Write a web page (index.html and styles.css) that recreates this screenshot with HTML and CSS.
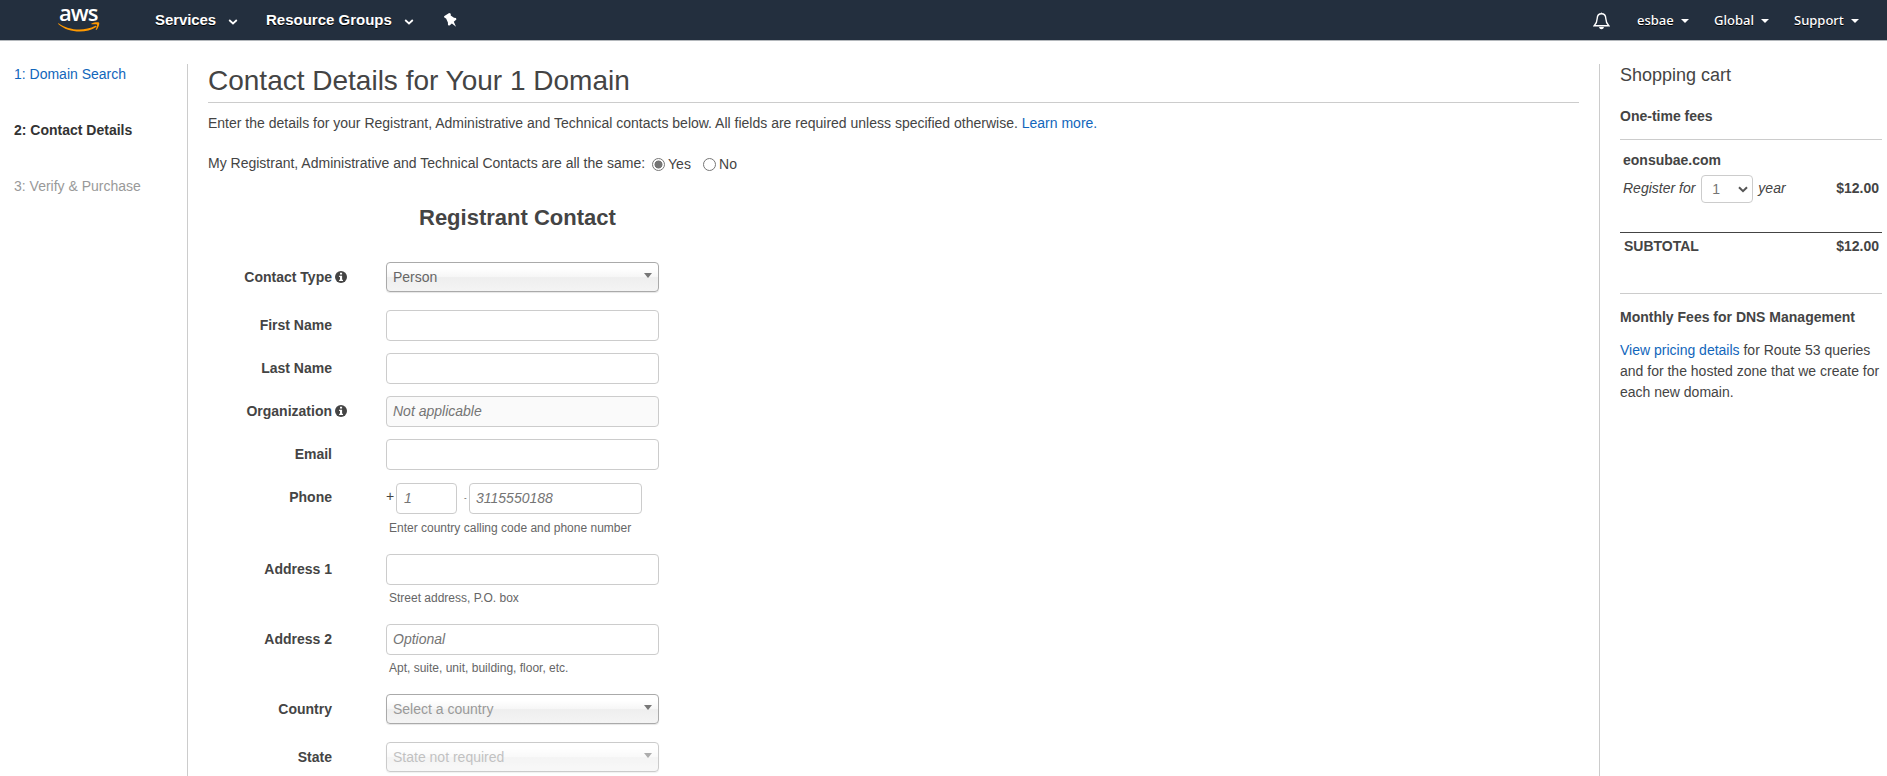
FILE: index.html
```
<!DOCTYPE html>
<html lang="en">
<head>
<meta charset="utf-8">
<title>Contact Details</title>
<link rel="stylesheet" href="styles.css">
</head>
<body>
<header class="topbar">
  <div class="brand">
    <div class="brand-text">aws</div>
    <svg class="smile" width="42" height="11" viewBox="0 0 42 11"><path d="M0.6 1.2C10 8 25 10 37.500 3.800C38.500 3.400 39 4.400 38.200 5C28 12 10 11 0.200 2C0 1.500 0.200 1 0.600 1.200Z" fill="#f90"/><path d="M33.500 1.600C36 0 40.500 0 41.100 0.700C41.700 1.700 40.500 6 38.300 7.900C37.700 8.200 37.500 8 37.800 7.400C38.500 5.600 39.400 3.300 39 2.600C38.500 2 36 2.100 33.900 2.300C33.300 2.300 33.200 1.900 33.500 1.600Z" fill="#f90"/></svg>
  </div>
  <div class="menu services">Services<svg width="10" height="6" viewBox="0 0 10 6"><path d="M1.200 1L5 4.500L8.800 1" fill="none" stroke="#fff" stroke-width="1.700"/></svg></div>
  <div class="menu groups">Resource Groups<svg width="10" height="6" viewBox="0 0 10 6"><path d="M1.200 1L5 4.500L8.800 1" fill="none" stroke="#fff" stroke-width="1.700"/></svg></div>
  <svg class="pin" width="13" height="14" viewBox="0 0 13 14"><path d="M5.200 0L6.800 0.700L6.700 2.500L10 4.700L12 5L12.400 6.600L9.800 8.700L12 13.700L7.900 10.400L5.500 12.600L4 12.200L3.900 9.600L2.100 5.500L0.500 4.800L0 3.200Z" fill="#fff"/></svg>
  <div class="account">
    <svg class="bell" width="17" height="18" viewBox="0 0 17 18"><path d="M8.500 1.800C5.500 1.800 4.300 4 4.200 6.500C4.100 9.500 3.500 11.500 1.200 13.800H15.800C13.500 11.500 12.900 9.500 12.800 6.500C12.700 4 11.500 1.800 8.500 1.800Z" fill="none" stroke="#fff" stroke-width="1.400"/><path d="M7.500 1.500Q8.500 -0.500 9.500 1.500M6 15H11Q10.500 17.300 8.500 17.300T6 15Z" fill="#fff"/></svg>
    <div class="acct esbae">esbae<i class="tri"></i></div>
    <div class="acct global">Global<i class="tri"></i></div>
    <div class="acct support">Support<i class="tri"></i></div>
  </div>
</header>
<div class="page">
  <nav class="steps">
    <a class="step link">1: Domain Search</a>
    <div class="step current">2: Contact Details</div>
    <div class="step later">3: Verify &amp; Purchase</div>
  </nav>
  <main class="content">
    <h1>Contact Details for Your 1 Domain</h1>
    <p class="intro">Enter the details for your Registrant, Administrative and Technical contacts below. All fields are required unless specified otherwise. <a class="link">Learn more.</a></p>
    <div class="same"><span>My Registrant, Administrative and Technical Contacts are all the same:</span><i class="radio on"></i><span class="opt yes">Yes</span><i class="radio"></i><span class="opt">No</span></div>
    <h2>Registrant Contact</h2>
    <form class="form">
      <div class="row tall"><label>Contact Type</label><svg class="info" width="12" height="12" viewBox="0 0 12 12"><circle cx="6" cy="6" r="6" fill="#444"/><path d="M5 1.800H7.100V3.600H5ZM4.100 4.700H7.100V8.700H8V10H4.100V8.700H5V6H4.100Z" fill="#fff"/></svg><div class="field"><div class="select">Person<i class="arrow"></i></div></div></div>
      <div class="row"><label>First Name</label><div class="field"><div class="input"></div></div></div>
      <div class="row"><label>Last Name</label><div class="field"><div class="input"></div></div></div>
      <div class="row"><label>Organization</label><svg class="info" width="12" height="12" viewBox="0 0 12 12"><circle cx="6" cy="6" r="6" fill="#444"/><path d="M5 1.800H7.100V3.600H5ZM4.100 4.700H7.100V8.700H8V10H4.100V8.700H5V6H4.100Z" fill="#fff"/></svg><div class="field"><div class="input off">Not applicable</div></div></div>
      <div class="row"><label>Email</label><div class="field"><div class="input"></div></div></div>
      <div class="row phone"><label>Phone</label><div class="field"><div class="numbers"><span class="plus">+</span><div class="input code">1</div><span class="dash">-</span><div class="input number">3115550188</div></div><div class="hint">Enter country calling code and phone number</div></div></div>
      <div class="row noted"><label>Address 1</label><div class="field"><div class="input"></div><div class="hint">Street address, P.O. box</div></div></div>
      <div class="row noted"><label>Address 2</label><div class="field"><div class="input">Optional</div><div class="hint">Apt, suite, unit, building, floor, etc.</div></div></div>
      <div class="row tall"><label>Country</label><div class="field"><div class="select empty">Select a country<i class="arrow"></i></div></div></div>
      <div class="row"><label>State</label><div class="field"><div class="select empty disabled">State not required<i class="arrow"></i></div></div></div>
    </form>
  </main>
  <aside class="cart">
    <h3>Shopping cart</h3>
    <div class="fees">One-time fees</div>
    <div class="domain">eonsubae.com</div>
    <div class="register"><em>Register for</em><div class="years">1<svg width="10" height="7" viewBox="0 0 10 7"><path d="M1 1.200L5 5.200L9 1.200" fill="none" stroke="#555" stroke-width="2"/></svg></div><em>year</em><b class="price">$12.00</b></div>
    <div class="subtotal"><span>SUBTOTAL</span><span>$12.00</span></div>
    <div class="monthly">Monthly Fees for DNS Management</div>
    <p class="pricing"><a class="link">View pricing details</a> for Route 53 queries and for the hosted zone that we create for each new domain.</p>
  </aside>
</div>
</body>
</html>
```
FILE: styles.css
```
* { box-sizing: border-box; }
body { margin: 0; height: 776px; overflow: hidden; background: #fff; color: #444; font: 14px/21px "Liberation Sans", Arial, sans-serif; }
.topbar { height: 41px; background: #232f3e; border-bottom: 1px solid #b4b8bc; display: flex; align-items: flex-start; color: #fff; }
.brand { width: 42px; margin-left: 58px; height: 40px; padding-top: 2px; }
.brand-text { font: 600 22px/20px "Open Sans", sans-serif; padding-left: 1px; letter-spacing: -1px; }
.smile { display: block; margin-top: -0.5px; }
.menu { display: flex; align-items: center; font-weight: bold; font-size: 15px; line-height: 40px; white-space: nowrap; text-shadow: 0 1px 0 #000; }
.menu svg { margin: 3px 0 0 12px; }
.services { margin-left: 55px; width: 111px; letter-spacing: -0.1px; }
.groups { width: 178px; }
.pin { margin-top: 13px; }
.account { margin-left: auto; display: flex; align-items: flex-start; font: 500 13px/40px "Noto Sans", sans-serif; text-shadow: 0 1px 0 #000; }
.bell { margin: 12px 27px 0 0; }
.acct { display: flex; align-items: center; }
.esbae { width: 77px; }
.global { width: 80px; }
.support { width: 93px; }
.tri { border: 4px solid transparent; border-top-color: #fff; border-bottom: 0; margin: 1px 0 0 7px; }
.link { color: #1166bb; }
.page { display: flex; height: 735px; padding-top: 23px; }
.steps { width: 188px; border-right: 1px solid #ccc; padding-left: 14px; }
.step { display: block; height: 56px; }
.current { font-weight: bold; color: #333; }
.later { color: #999; }
.content { width: 1371px; margin-left: 20px; }
h1 { margin: 0; height: 39px; border-bottom: 1px solid #ccc; font-size: 28px; font-weight: normal; line-height: 33px; }
.intro { margin: 10px 0 19px; }
.same { display: flex; height: 21px; }
.radio { width: 13px; height: 13px; border: 1px solid #767676; border-radius: 50%; margin: 5px 3px 0 7px; }
.on { background: radial-gradient(circle, #767676 3.700px, #fff 4.300px); }
.opt { margin-top: 1px; }
.yes { width: 30px; }
.opt + .radio { margin-left: 5px; }
h2 { margin: 29px 0 0; padding-left: 211px; font-size: 22px; line-height: 30px; height: 59px; }
.row { display: flex; height: 43px; }
.tall { height: 48px; }
.phone { height: 72px; }
.noted { height: 70px; }
.row label { width: 124px; text-align: right; font-weight: bold; line-height: 31px; }
.info { margin: 9px 0 0 3px; }
.field { width: 273px; margin-left: auto; margin-right: 920px; }
.input { width: 273px; height: 31px; border: 1px solid #ccc; border-radius: 4px; padding-left: 6px; line-height: 29px; font-style: italic; color: #757575; }
.off { background: #fafafa; }
.select { position: relative; width: 273px; height: 30px; border: 1px solid #aaa; border-radius: 4px; padding-left: 6px; line-height: 29px; color: #666; background: linear-gradient(#fff 20%, #f6f6f6 50%, #eee 52%, #f4f4f4); box-shadow: 0 1px 1px rgba(0,0,0,.1); }
.arrow { position: absolute; right: 6px; top: 10px; border: 4px solid transparent; border-top: 5px solid #777; border-bottom: 0; }
.empty { color: #999; }
.disabled { opacity: .6; }
.numbers { display: flex; height: 37px; padding-top: 1px; }
.plus { width: 10px; line-height: 27px; }
.code { width: 61px; padding-left: 7px; }
.dash { width: 12px; padding-left: 7px; font-size: 8px; line-height: 29px; }
.number { width: 173px; }
.hint { padding-left: 3px; font-size: 12px; line-height: 19px; color: #666; }
.noted .hint { margin-top: 4px; }
.cart { width: 288px; margin-left: 20px; border-left: 1px solid #ccc; padding: 0 5px 0 20px; }
h3 { margin: 0; font-size: 18px; font-weight: normal; line-height: 22px; }
.fees { font-weight: bold; margin-top: 20px; height: 34px; border-bottom: 1px solid #ccc; }
.domain { font-weight: bold; margin-top: 10px; padding-left: 3px; }
.register { display: flex; margin-top: 4px; height: 58px; padding: 0 3px; line-height: 27px; border-bottom: 1px solid #444; }
.years { width: 52px; height: 28px; border: 1px solid #ccc; border-radius: 4px; margin: 0 5px 0 6px; padding: 0 4px 0 10px; display: flex; align-items: center; justify-content: space-between; color: #757575; }
.price { margin-left: auto; }
.subtotal { display: flex; justify-content: space-between; padding: 3px 3px 0 4px; height: 61px; border-bottom: 1px solid #ccc; font-weight: bold; }
.monthly { font-weight: bold; margin-top: 13px; }
.pricing { margin: 12px 0 0; }
```
